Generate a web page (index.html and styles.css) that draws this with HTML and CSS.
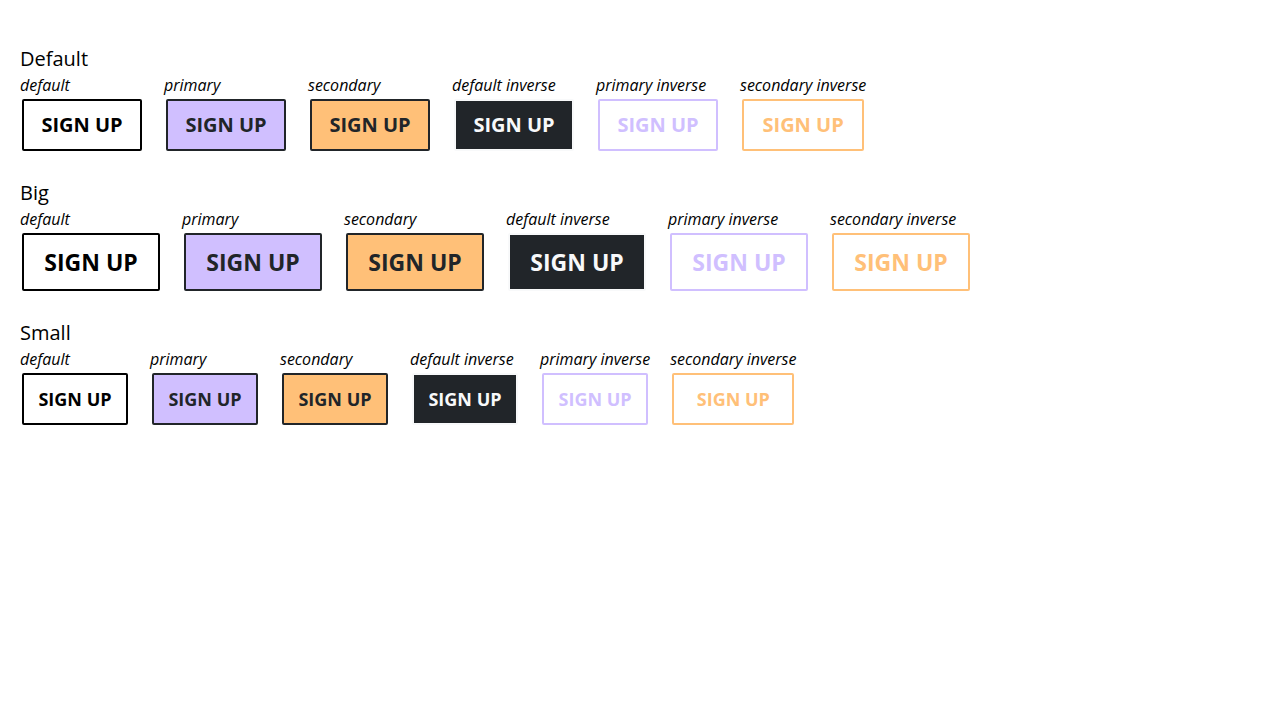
FILE: index.html
```html
<!DOCTYPE html>
<html lang="en">
<head>
<meta charset="utf-8">
<title>Buttons</title>
<link rel="stylesheet" href="styles.css">
</head>
<body>
<main class="page">
  <section class="group">
    <h2 class="group-title">Default</h2>
    <div class="row">
      <div class="item"><span class="label">default</span><button class="btn btn-default">SIGN UP</button></div>
      <div class="item"><span class="label">primary</span><button class="btn btn-primary">SIGN UP</button></div>
      <div class="item"><span class="label">secondary</span><button class="btn btn-secondary">SIGN UP</button></div>
      <div class="item"><span class="label">default inverse</span><button class="btn btn-default-inv">SIGN UP</button></div>
      <div class="item"><span class="label">primary inverse</span><button class="btn btn-primary-inv">SIGN UP</button></div>
      <div class="item"><span class="label">secondary inverse</span><button class="btn btn-secondary-inv">SIGN UP</button></div>
    </div>
  </section>
  <section class="group">
    <h2 class="group-title">Big</h2>
    <div class="row">
      <div class="item"><span class="label">default</span><button class="btn big btn-default">SIGN UP</button></div>
      <div class="item"><span class="label">primary</span><button class="btn big btn-primary">SIGN UP</button></div>
      <div class="item"><span class="label">secondary</span><button class="btn big btn-secondary">SIGN UP</button></div>
      <div class="item"><span class="label">default inverse</span><button class="btn big btn-default-inv">SIGN UP</button></div>
      <div class="item"><span class="label">primary inverse</span><button class="btn big btn-primary-inv">SIGN UP</button></div>
      <div class="item"><span class="label">secondary inverse</span><button class="btn big btn-secondary-inv">SIGN UP</button></div>
    </div>
  </section>
  <section class="group">
    <h2 class="group-title">Small</h2>
    <div class="row">
      <div class="item"><span class="label">default</span><button class="btn small btn-default">SIGN UP</button></div>
      <div class="item"><span class="label">primary</span><button class="btn small btn-primary">SIGN UP</button></div>
      <div class="item"><span class="label">secondary</span><button class="btn small btn-secondary">SIGN UP</button></div>
      <div class="item"><span class="label">default inverse</span><button class="btn small btn-default-inv">SIGN UP</button></div>
      <div class="item"><span class="label">primary inverse</span><button class="btn small btn-primary-inv">SIGN UP</button></div>
      <div class="item"><span class="label">secondary inverse</span><button class="btn small btn-secondary-inv">SIGN UP</button></div>
    </div>
  </section>
</main>
</body>
</html>
```
FILE: styles.css
```css
* { box-sizing: border-box; }
html, body { margin: 0; padding: 0; background: #fff; }
body {
  font-family: "Open Sans", "Noto Sans", sans-serif;
  color: #000;
}
.page {
  padding: 47px 20px 0;
  display: flex;
  flex-direction: column;
  gap: 30px;
}
.group-title {
  margin: 0 0 4px;
  font-size: 20px;
  line-height: 24px;
  font-weight: 400;
}
.row {
  display: flex;
  align-items: flex-start;
  gap: 20px;
}
.item {
  display: flex;
  flex-direction: column;
  align-items: stretch;
  gap: 4px;
}
.label {
  font-size: 16px;
  line-height: 20px;
  font-style: italic;
  white-space: nowrap;
}
.btn {
  margin: 0 2px;
  font-family: "Open Sans", "Noto Sans", sans-serif;
  font-weight: 700;
  font-size: 20px;
  line-height: 48px;
  min-width: 120px;
  padding: 0 16px;
  border: 2px solid #000;
  border-radius: 2px;
  background: #fff;
  color: #000;
  white-space: nowrap;
  text-align: center;
  cursor: pointer;
}
.btn.big {
  font-size: 23px;
  line-height: 54px;
  min-width: 138px;
  padding: 0 18px;
}
.btn.small {
  font-size: 18px;
  line-height: 48px;
  min-width: 106px;
  padding: 0 13px;
}
.btn-default { background: #fff; color: #000; border-color: #000; }
.btn-primary { background: #d0bfff; color: #212529; border-color: #212529; }
.btn-secondary { background: #ffc078; color: #212529; border-color: #212529; }
.btn-default-inv { background: #212529; color: #f8f9fa; border-color: #f8f9fa; }
.btn-primary-inv { background: #fff; color: #d0bfff; border-color: #d0bfff; }
.btn-secondary-inv { background: #fff; color: #ffc078; border-color: #ffc078; }
```
